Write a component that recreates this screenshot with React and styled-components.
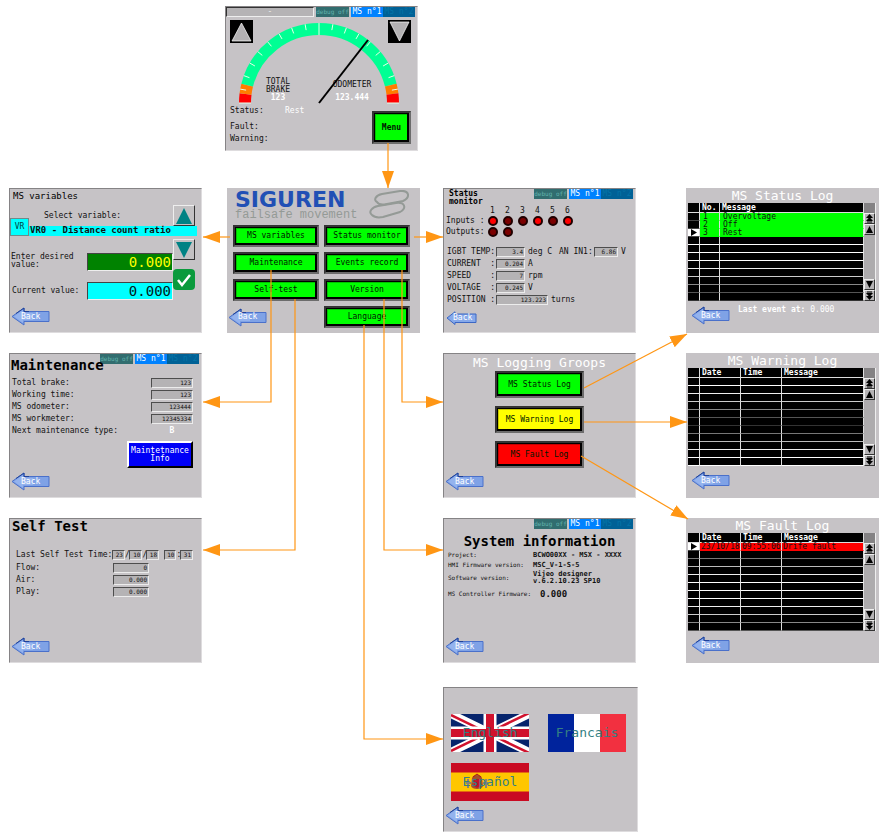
import React from "react";
import styled, { createGlobalStyle } from "styled-components";

const GlobalStyle = createGlobalStyle`
  *, *::before, *::after { box-sizing: border-box; }
  body { margin: 0; background: #fff; }
  button, input { font: inherit; color: inherit; margin: 0; padding: 0; border: 0; border-radius: 0; }
  button { cursor: pointer; }
  h1, h2, p { margin: 0; font-weight: normal; }
  svg { display: block; }
`;

const ORANGE = "#ff9614";

/* ---------- diagram canvas ---------- */

const Canvas = styled.main`
  position: relative;
  width: max-content;
  min-height: 100vh;
  padding: 6px 4px 4px 9px;
  font: 8px/8px "DejaVu Sans Mono", "Liberation Mono", monospace;
  color: #111;
`;

const Board = styled.div`
  display: grid;
  grid-template-columns: 193px 23px 195px 23px 195px 48px 193px;
  grid-template-rows: auto 37px auto 20px auto 20px auto 24px auto;
`;

const Links = styled.svg`
  position: absolute;
  top: 0;
  left: 0;
  pointer-events: none;
`;

const Screen = styled.section`
  grid-column: ${(p) => p.$col * 2 - 1};
  grid-row: ${(p) => p.$row * 2 - 1};
  justify-self: ${(p) => p.$side || "start"};
  display: flex;
  flex-direction: column;
  width: ${(p) => (p.$wide ? 195 : 193)}px;
  min-height: 145px;
  background: #c6c3c6;
  border: 1px solid;
  border-color: ${(p) => (p.$flat ? "#c6c3c6" : "#858385 #dedcde #dedcde #858385")};
`;

/* ---------- shared parts ---------- */

const Header = styled.header`
  display: grid;
  min-height: ${(p) => p.$height}px;
  > * { grid-area: 1 / 1; }
`;

const Title = styled.h2`
  align-self: ${(p) => p.$align || "end"};
  justify-self: ${(p) => (p.$center ? "center" : "start")};
  padding-left: ${(p) => p.$pad || 0}px;
  font-size: ${(p) => p.$size || 14}px;
  line-height: ${(p) => p.$line || 14}px;
  font-weight: ${(p) => (p.$light || p.$plain ? 400 : 700)};
  color: ${(p) => (p.$light ? "#fff" : "#000")};
  white-space: pre;
`;

const TabBar = styled.nav`
  display: flex;
  justify-self: end;
  align-self: start;
  margin-right: 2px;
`;

const Tab = styled.button`
  width: 32px;
  height: 10px;
  line-height: 10px;
  text-align: center;
  white-space: nowrap;
  overflow: hidden;
  background: ${(p) => (p.$on ? "#0082ff" : "#006196")};
  color: ${(p) => (p.$on ? "#fff" : "#0474a8")};
`;

const DebugTab = styled(Tab)`
  width: 33px;
  margin-right: 2px;
  font-size: 6px;
  background: #316d6f;
  color: #62b3ad;
`;

const BackButton = styled.button`
  display: grid;
  align-items: center;
  justify-items: start;
  flex: none;
  background: none;
  color: #fff;
  > * { grid-area: 1 / 1; }
`;

const BackLabel = styled.span`
  padding-left: ${(p) => (p.$small ? 7 : 10)}px;
`;

const Foot = styled.footer`
  display: flex;
  margin-top: auto;
  padding: 0 0 ${(p) => p.$bottom || 6}px ${(p) => p.$left || 1}px;
`;

const KeyButton = styled.button`
  width: ${(p) => p.$w}px;
  height: ${(p) => p.$h}px;
  border: 2px solid;
  border-color: #343434 #6c6c6c #6c6c6c #343434;
  background: ${(p) => p.$tone || "#00ff00"};
  box-shadow: inset 1px 1px 0 #000, inset -2px -2px 0 #000, inset 2px 2px 0 ${(p) => p.$edge || "#00c400"};
  text-align: center;
  white-space: nowrap;
  color: #001800;
  font-weight: ${(p) => (p.$bold ? 700 : 400)};
`;

const Row = styled.div`
  display: flex;
  align-items: center;
  justify-content: ${(p) => (p.$spread ? "space-between" : "flex-start")};
  min-height: 12px;
  white-space: pre;
`;

const Value = styled.output`
  width: ${(p) => p.$w}px;
  height: 10px;
  padding: 0 1px;
  line-height: 8px;
  font-size: ${(p) => p.$size || 6}px;
  text-align: right;
  border: 1px solid;
  border-color: #4d4d4d #ececec #ececec #4d4d4d;
  background: #b5b3b5;
`;

function Back({ small }) {
  return (
    <BackButton>
      {small ? (
        <svg width="31" height="14" viewBox="0 0 31 14" aria-hidden="true">
          <path d="M1 7 L9 .8 V3 H30 V11.500 H9 V13.500 Z" fill="#86a9ea" stroke="#3b66c4" />
        </svg>
      ) : (
        <svg width="39" height="19" viewBox="0 0 39 19" aria-hidden="true">
          <path d="M1 9.500 L13 1 V4.500 H38 V14.500 H13 V18 Z" fill="#7fa2e6" stroke="#4a70ca" />
          <path d="M3 9.500 L12 3 V6 H22 V13 H12 V16 Z" fill="#a9c4f5" opacity=".5" />
          <path d="M5 6.500 L13 1 V4.500 H18" fill="none" stroke="#1f4299" />
        </svg>
      )}
      <BackLabel $small={small}>Back</BackLabel>
    </BackButton>
  );
}

function Tabs() {
  return (
    <TabBar>
      <DebugTab>debug off</DebugTab>
      <Tab $on>MS n°1</Tab>
      <Tab>MS n°2</Tab>
    </TabBar>
  );
}

/* ---------- gauge screen ---------- */

const TopBar = styled.div`
  display: flex;
  justify-content: space-between;
`;

const Ticker = styled.output`
  flex: 1;
  height: 10px;
  margin-right: 2px;
  text-align: center;
  color: #eee;
  border: 1px solid;
  border-color: #333 #eee #eee #333;
  background: #b5b3b5;
`;

const Dial = styled.div`
  display: grid;
  > * { grid-area: 1 / 1; }
`;

const DialKeys = styled.div`
  display: flex;
  justify-content: space-between;
  align-items: flex-start;
  padding: 3px 6px 0 4px;
`;

const DialKey = styled.button`
  display: grid;
  place-items: center;
  width: 23px;
  height: 23px;
  background: #000;
`;

const StatusArea = styled.div`
  display: flex;
  justify-content: space-between;
  padding: 0 6px 0 4px;
`;

const StatusList = styled.div`
  > :first-child { margin-bottom: 4px; }
`;

const StatusName = styled.span`
  width: 55px;
`;

const Bright = styled.span`
  color: #fff;
`;

const MenuSlot = styled.div`
  padding-top: 6px;
`;

const polar = (deg, r) => {
  const a = (deg * Math.PI) / 180;
  return `${(93 - r * Math.cos(a)).toFixed(2)} ${(86 - r * Math.sin(a)).toFixed(2)}`;
};
const arc = (from, to) => `M${polar(from, 74)} A74 74 0 0 1 ${polar(to, 74)}`;
const ticks = Array.from({ length: 19 }, (_, i) => i * 10);

function GaugeScreen() {
  return (
    <Screen $col={2} $row={1}>
      <TopBar>
        <Ticker>-</Ticker>
        <Tabs />
      </TopBar>
      <Dial>
        <svg width="190" height="88" viewBox="0 0 190 88" role="img" aria-label="Gauge">
          <g fill="none" strokeWidth="12">
            <path d={arc(0, 7)} stroke="#f00" />
            <path d={arc(7, 14)} stroke="#ff7d00" />
            <path d={arc(14, 166)} stroke="#00ff94" />
            <path d={arc(166, 173)} stroke="#ff7d00" />
            <path d={arc(173, 180)} stroke="#f00" />
          </g>
          {ticks.map((t) => (
            <path key={t} d={`M${polar(t, t % 90 ? 74 : 68)} L${polar(t, 80)}`} stroke="#e8ffe8" strokeWidth="1" />
          ))}
          <g fontSize="8" textAnchor="middle" fill="#111">
            <text x="52" y="67">TOTAL</text>
            <text x="52" y="75">BRAKE</text>
            <text x="126" y="70">ODOMETER</text>
            <g fill="#fff" fontWeight="700">
              <text x="52" y="83">123</text>
              <text x="126" y="83">123.444</text>
            </g>
          </g>
          <path d="M93 86 L142 23" stroke="#000" strokeWidth="2" />
        </svg>
        <DialKeys>
          <DialKey aria-label="Previous">
            <svg width="21" height="21" viewBox="0 0 21 21"><path d="M10.500 2 L20 20 H1 Z" fill="#b3b1b3" stroke="#fff" strokeWidth=".7" /></svg>
          </DialKey>
          <DialKey aria-label="Next">
            <svg width="21" height="21" viewBox="0 0 21 21"><path d="M1 1 H20 L10.500 20 Z" fill="#b3b1b3" stroke="#fff" strokeWidth=".7" /></svg>
          </DialKey>
        </DialKeys>
      </Dial>
      <StatusArea>
        <StatusList>
          <Row><StatusName>Status:</StatusName><Bright>Rest</Bright></Row>
          <Row>Fault:</Row>
          <Row>Warning:</Row>
        </StatusList>
        <MenuSlot><KeyButton $w={39} $h={33} $bold>Menu</KeyButton></MenuSlot>
      </StatusArea>
    </Screen>
  );
}

/* ---------- variables screen ---------- */

const Picker = styled.div`
  display: flex;
  align-items: flex-end;
`;

const PickerBody = styled.div`
  flex: 1;
`;

const PickerTop = styled.div`
  display: flex;
  align-items: center;
  justify-content: space-between;
  height: 23px;
  padding: 2px 6px 0 15px;
`;

const CodeButton = styled.button`
  width: 19px;
  height: 18px;
  background: #00ffff;
  border: 1px solid #6e8b8b;
  color: #044;
`;

const Selected = styled.output`
  display: block;
  height: 10px;
  margin-right: 4px;
  padding-left: 1px;
  font-size: 9px;
  line-height: 9px;
  font-weight: 700;
  white-space: nowrap;
  background: #00ffff;
`;

const StepButton = styled.button`
  display: grid;
  place-items: center;
  width: 22px;
  height: 21px;
  background: #c3c1c3;
  border: 1px solid;
  border-color: #eee #333 #333 #eee;
`;

const ConfirmButton = styled(StepButton)`
  border: 0;
  border-radius: 4px;
  background: #0a9a3c;
`;

const Entry = styled.div`
  display: flex;
  justify-content: space-between;
  padding-right: 6px;
`;

const EntryFields = styled.div`
  display: grid;
  gap: 11px;
  padding-top: 17px;
`;

const EntryKeys = styled.div`
  display: grid;
  align-content: start;
  gap: 9px;
  padding-top: 3px;
`;

const Field = styled.div`
  display: flex;
  align-items: flex-end;
  min-height: 18px;
`;

const FieldLabel = styled.label`
  align-self: ${(p) => (p.$mid ? "center" : "flex-start")};
  width: 77px;
  padding-left: ${(p) => (p.$mid ? 2 : 1)}px;
`;

const FieldInput = styled.input`
  width: 86px;
  height: 18px;
  padding: 0 1px;
  font-size: 14px;
  text-align: right;
  color: ${(p) => (p.$live ? "#002020" : "#ffff00")};
  background: ${(p) => (p.$live ? "#00ffff" : "#008200")};
  border: 1px solid;
  border-color: #444 #eee #eee #444;
`;

function VariablesScreen() {
  return (
    <Screen $col={1} $row={2}>
      <Header $height={14}><Title $size={9} $pad={3} $plain>MS variables</Title></Header>
      <Picker>
        <CodeButton>VR</CodeButton>
        <PickerBody>
          <PickerTop>
            <span>Select variable:</span>
            <StepButton aria-label="Previous variable">
              <svg width="16" height="16" viewBox="0 0 16 16"><path d="M8 0 L16 16 H0 Z" fill="#008284" /></svg>
            </StepButton>
          </PickerTop>
          <Selected>VR0 - Distance count ratio</Selected>
        </PickerBody>
      </Picker>
      <Entry>
        <EntryFields>
          <Field>
            <FieldLabel htmlFor="desired">Enter desired<br />value:</FieldLabel>
            <FieldInput id="desired" defaultValue="0.000" />
          </Field>
          <Field>
            <FieldLabel $mid htmlFor="current">Current value:</FieldLabel>
            <FieldInput $live id="current" readOnly value="0.000" />
          </Field>
        </EntryFields>
        <EntryKeys>
          <StepButton aria-label="Next variable">
            <svg width="16" height="16" viewBox="0 0 16 16"><path d="M0 0 H16 L8 16 Z" fill="#008284" /></svg>
          </StepButton>
          <ConfirmButton aria-label="Confirm">
            <svg width="16" height="16" viewBox="0 0 16 16"><path d="M2 8 L6 13 L14 3" fill="none" stroke="#fff" strokeWidth="2.500" /></svg>
          </ConfirmButton>
        </EntryKeys>
      </Entry>
      <Foot><Back /></Foot>
    </Screen>
  );
}

/* ---------- menu screen ---------- */

const BrandBar = styled.div`
  display: flex;
  justify-content: space-between;
  height: 36px;
  padding: 1px 8px 0 7px;
`;

const Brand = styled.h1`
  font: 700 22px/20px "DejaVu Sans", "Liberation Sans", sans-serif;
  color: #2150b5;
`;

const Tagline = styled.p`
  font: 12px/10px "Liberation Mono", monospace;
  color: #949a96;
`;

const MenuGrid = styled.nav`
  display: grid;
  grid-template-columns: 91px 86px;
  gap: 5px;
  justify-items: end;
`;

const MenuBack = styled.div`
  justify-self: start;
  align-self: center;
`;

function MenuScreen() {
  return (
    <Screen $col={2} $row={2} $side="end" $flat>
      <BrandBar>
        <div>
          <Brand>SIGUREN</Brand>
          <Tagline>failsafe movement</Tagline>
        </div>
        <svg width="42" height="30" viewBox="0 0 42 30" aria-hidden="true">
          <g fill="none" stroke="#949a96" strokeWidth="2">
            <path d="M8 12 C4 10 7 5 13 4 L31 1 C40 0 42 7 34 11 L18 14 C13 15 9 14 8 12 Z" />
            <path d="M3 25 C-1 22 3 17 9 16 L27 13 C36 12 38 18 31 22 L14 27 C9 28 5 27 3 25 Z" />
          </g>
        </svg>
      </BrandBar>
      <MenuGrid>
        {["MS variables", "Status monitor", "Maintenance", "Events record", "Self-test", "Version"].map((t) => (
          <KeyButton key={t} $w={86} $h={22}>{t}</KeyButton>
        ))}
        <MenuBack><Back /></MenuBack>
        <KeyButton $w={86} $h={22}>Language</KeyButton>
      </MenuGrid>
    </Screen>
  );
}

/* ---------- status monitor ---------- */

const LampGrid = styled.div`
  display: grid;
  grid-template-columns: 41px repeat(6, 15px);
  grid-template-rows: 9px 11px 11px;
  align-items: center;
  justify-items: center;
  margin-bottom: 9px;
`;

const LampName = styled.span`
  grid-column: 1;
  justify-self: start;
  padding-left: 2px;
  white-space: pre;
`;

const Lamp = styled.i`
  width: 10px;
  height: 10px;
  border: 2px solid #200000;
  border-radius: 50%;
  background: ${(p) => (p.$on ? "#ff0000" : "#7b0000")};
`;

const ReadName = styled.span`
  width: ${(p) => p.$w}px;
  padding-left: 3px;
`;

const READINGS = [
  ["CURRENT  :", "0.204", "A", 29],
  ["SPEED    :", "7", "rpm", 29],
  ["VOLTAGE  :", "0.245", "V", 29],
  ["POSITION :", "123.223", "turns", 52],
];

function StatusScreen() {
  return (
    <Screen $col={3} $row={2}>
      <Header $height={17}>
        <Title $size={8} $line={8} $pad={5}>{"Status\nmonitor"}</Title>
        <Tabs />
      </Header>
      <LampGrid>
        <LampName />
        {[1, 2, 3, 4, 5, 6].map((n) => <span key={n}>{n}</span>)}
        <LampName>Inputs :</LampName>
        {[1, 0, 0, 1, 0, 1].map((on, i) => <Lamp key={i} $on={on} />)}
        <LampName>Outputs:</LampName>
        <Lamp /><Lamp />
      </LampGrid>
      <Row>
        <ReadName $w={52}>IGBT TEMP:</ReadName>
        <Value $w={29}>3.4</Value>
        <ReadName $w={31}>deg C</ReadName>
        <ReadName $w={38}>AN IN1:</ReadName>
        <Value $w={24}>6.86</Value>
        <ReadName $w={12}>V</ReadName>
      </Row>
      {READINGS.map(([name, value, unit, w]) => (
        <Row key={name}>
          <ReadName $w={52}>{name}</ReadName>
          <Value $w={w}>{value}</Value>
          <ReadName $w={30}>{unit}</ReadName>
        </Row>
      ))}
      <Foot $left={2} $bottom={7}><Back small /></Foot>
    </Screen>
  );
}

/* ---------- maintenance, self test ---------- */

const List = styled.div`
  padding: ${(p) => p.$top}px 8px 0 ${(p) => p.$left}px;
`;

const Kind = styled.output`
  width: 42px;
  text-align: center;
  font-weight: 700;
  color: #fff;
`;

const InfoButton = styled.button`
  align-self: flex-end;
  width: 66px;
  height: 27px;
  margin: 4px 8px 0 0;
  border: 2px solid;
  border-color: #fff #000 #000 #fff;
  background: #0000f7;
  color: #fff;
`;

function MaintenanceScreen() {
  const items = [["Total brake:", "123"], ["Working time:", "123"], ["MS odometer:", "123444"], ["MS workmeter:", "12345334"]];
  return (
    <Screen $col={1} $row={3}>
      <Header $height={18}>
        <Tabs />
        <Title $pad={1}>Maintenance</Title>
      </Header>
      <List $top={5} $left={2}>
        {items.map(([name, value]) => (
          <Row key={name} $spread><span>{name}</span><Value $w={42}>{value}</Value></Row>
        ))}
        <Row $spread><span>Next maintenance type:</span><Kind>B</Kind></Row>
      </List>
      <InfoButton>Maintetnance<br />Info</InfoButton>
      <Foot><Back /></Foot>
    </Screen>
  );
}

const StampRow = styled(Row)`
  margin-bottom: 1px;
`;

const TestName = styled.span`
  width: 97px;
`;

const Mark = styled.span`
  width: ${(p) => p.$w || 4}px;
  text-align: center;
`;

function SelfTestScreen() {
  return (
    <Screen $col={1} $row={4}>
      <Header $height={14}><Title $pad={2}>Self Test</Title></Header>
      <List $top={16} $left={6}>
        <StampRow>
          <TestName>Last Self Test Time:</TestName>
          <Value $w={13}>23</Value><Mark>/</Mark>
          <Value $w={14}>10</Value><Mark>/</Mark>
          <Value $w={13}>18</Value><Mark $w={5} />
          <Value $w={13}>10</Value><Mark>:</Mark>
          <Value $w={13}>31</Value>
        </StampRow>
        {[["Flow:", "0"], ["Air:", "0.000"], ["Play:", "0.000"]].map(([name, value]) => (
          <Row key={name}><TestName>{name}</TestName><Value $w={36}>{value}</Value></Row>
        ))}
      </List>
      <Foot><Back /></Foot>
    </Screen>
  );
}

/* ---------- logging groups ---------- */

const GroupList = styled.nav`
  display: grid;
  justify-items: center;
  gap: 8px;
`;

function LoggingScreen() {
  return (
    <Screen $col={3} $row={3}>
      <Header $height={17}><Title $size={13} $light $center $align="center">MS Logging Groops</Title></Header>
      <GroupList>
        <KeyButton $w={89} $h={27}>MS Status Log</KeyButton>
        <KeyButton $w={89} $h={27} $tone="#ffff00" $edge="#c8c800">MS Warning Log</KeyButton>
        <KeyButton $w={89} $h={27} $tone="#ff0000" $edge="#c80000">MS Fault Log</KeyButton>
      </GroupList>
      <Foot><Back /></Foot>
    </Screen>
  );
}

/* ---------- system information ---------- */

const InfoGrid = styled.dl`
  display: grid;
  grid-template-columns: 85px 1fr;
  grid-template-rows: 10px 10px 16px 16px;
  align-items: center;
  margin: 0;
  padding: 1px 0 0 4px;
  white-space: nowrap;
  font-size: 6px;
`;

const InfoValue = styled.dd`
  margin: 0;
  padding-left: ${(p) => (p.$large ? 7 : 0)}px;
  font-size: ${(p) => (p.$large ? 9 : 7)}px;
  line-height: 7px;
  font-weight: 700;
`;

function SystemScreen() {
  return (
    <Screen $col={3} $row={4}>
      <Header $height={30}>
        <Tabs />
        <Title $center $line={16}>System information</Title>
      </Header>
      <InfoGrid>
        <dt>Project:</dt><InfoValue>BCWO00XX - MSX - XXXX</InfoValue>
        <dt>HMI Firmware version:</dt><InfoValue>MSC_V-1-S-5</InfoValue>
        <dt>Software version:</dt><InfoValue>Vijeo designer<br />v.6.2.10.23 SP10</InfoValue>
        <dt>MS Controller Firmware:</dt><InfoValue $large>0.000</InfoValue>
      </InfoGrid>
      <Foot><Back /></Foot>
    </Screen>
  );
}

/* ---------- log tables ---------- */

const LogFrame = styled.div`
  display: flex;
  padding: 0 2px 0 1px;
`;

const LogTable = styled.table`
  flex: 1;
  table-layout: fixed;
  border-spacing: 0;
  background: #000;
`;

const LogHead = styled.th`
  width: ${(p) => (p.$w ? `${p.$w}px` : "auto")};
  height: 10px;
  padding: 0 0 0 2px;
  line-height: 9px;
  text-align: left;
  color: #fff;
  border-right: 1px solid #ddd;
  border-bottom: 1px solid #ddd;
`;

const LogCell = styled.td`
  height: 8px;
  padding: 0 0 0 ${(p) => (p.$snug ? 1 : 3)}px;
  line-height: 7px;
  white-space: nowrap;
  background: ${(p) => p.$tone || "#000"};
  border-right: 1px solid #ddd;
  border-bottom: 1px solid ${(p) => p.$line};
`;

const Scroller = styled.div`
  display: flex;
  flex-direction: column;
  width: 12px;
  background: #adabad;
  border-right: 1px solid #eee;
`;

const Corner = styled.div`
  height: 10px;
  background: #848284;
`;

const ScrollButton = styled.button`
  display: grid;
  place-items: center;
  height: 11px;
  background: #b5b3b5;
  border: 1px solid;
  border-color: #eee #333 #333 #eee;
`;

const Track = styled.div`
  flex: 1;
`;

const LogNote = styled.p`
  padding-left: 8px;
  color: #fff;
  white-space: pre;
`;

const Strong = styled.b`
  font-weight: 700;
`;

const LINES = ["#fff", "#eee", "#ccc", "#888", "#555", "#333", "#777", "#bbb", "#eee", "#fff", "#fff"];

const ICONS = {
  top: "M4.500 0 L8 4 H1 Z M4.500 3 L8 7 H1 Z M2 7.500 H7 V8.500 H2 Z",
  up: "M4.500 1 L8 8 H1 Z",
  down: "M1 1 H8 L4.500 8 Z",
  bottom: "M2 .5 H7 V1.500 H2 Z M1 2 H8 L4.500 6 Z M1 5 H8 L4.500 9 Z",
};

function Scroll({ kind }) {
  return (
    <ScrollButton aria-label={kind}>
      <svg width="9" height="9" viewBox="0 0 9 9"><path d={ICONS[kind]} fill="#000" /></svg>
    </ScrollButton>
  );
}

function LogScreen({ row, title, heads, entries, tone, mark, shift = 0, note }) {
  const columns = heads.length;
  return (
    <Screen $col={4} $row={row} $flat>
      <Header $height={14}><Title $size={13} $light $center $align="center">{title}</Title></Header>
      <LogFrame>
        <LogTable>
          <thead>
            <tr>{heads.map(([name, w], i) => <LogHead key={i} $w={w}>{name}</LogHead>)}</tr>
          </thead>
          <tbody>
            {LINES.map((_, r) => {
              const entry = entries[r];
              const line = entry ? tone : LINES[(r + shift) % LINES.length];
              return (
                <tr key={r}>
                  <LogCell $line={entry ? "#444" : line} $tone={r === mark ? "#fff" : "#000"}>
                    {r === mark && <svg width="6" height="7" viewBox="0 0 6 7" aria-hidden="true"><path d="M0 0 L6 3.500 L0 7 Z" /></svg>}
                  </LogCell>
                  {Array.from({ length: columns - 1 }, (_, c) => (
                    <LogCell key={c} $line={line} $tone={entry && tone} $snug={columns > 3}>{entry && entry[c]}</LogCell>
                  ))}
                </tr>
              );
            })}
          </tbody>
        </LogTable>
        <Scroller>
          <Corner />
          <Scroll kind="top" />
          <Scroll kind="up" />
          <Track />
          <Scroll kind="down" />
          <Scroll kind="bottom" />
        </Scroller>
      </LogFrame>
      <Foot $left={4} $bottom={7}>
        <Back />
        {note && <LogNote><Strong>Last event at:</Strong> 0.000</LogNote>}
      </Foot>
    </Screen>
  );
}

const EVENT_HEADS = [["", 12], ["Date", 41], ["Time", 41], ["Message"]];

/* ---------- languages ---------- */

const FlagGrid = styled.div`
  display: grid;
  grid-template-columns: 78px 78px;
  gap: 11px 19px;
  padding: 26px 0 0 7px;
`;

const FlagButton = styled.button`
  display: grid;
  place-items: center;
  height: 38px;
  background: none;
  font-size: 13px;
  color: #357f83;
  > * { grid-area: 1 / 1; }
`;

function LanguageScreen() {
  return (
    <Screen $col={3} $row={5} $wide>
      <FlagGrid>
        <FlagButton>
          <svg width="78" height="38" viewBox="0 0 78 38" aria-hidden="true">
            <path d="M0 0 H78 V38 H0 Z" fill="#06246c" />
            <path d="M0 0 L78 38 M78 0 L0 38" stroke="#fff" strokeWidth="8" />
            <path d="M0 1 L39 20 L78 39 M78 -1 L39 18 L0 37" fill="none" stroke="#d0122d" strokeWidth="2.500" />
            <path d="M39 0 V38 M0 19 H78" stroke="#fff" strokeWidth="13" />
            <path d="M39 0 V38 M0 19 H78" stroke="#d0122d" strokeWidth="8" />
          </svg>
          <span>English</span>
        </FlagButton>
        <FlagButton>
          <svg width="78" height="38" viewBox="0 0 78 38" aria-hidden="true">
            <path d="M0 0 H26 V38 H0 Z" fill="#00239c" />
            <path d="M26 0 H52 V38 H26 Z" fill="#fff" />
            <path d="M52 0 H78 V38 H52 Z" fill="#f23040" />
          </svg>
          <span>Francais</span>
        </FlagButton>
        <FlagButton>
          <svg width="78" height="38" viewBox="0 0 78 38" aria-hidden="true">
            <path d="M0 0 H78 V38 H0 Z" fill="#c90a22" />
            <path d="M0 9.500 H78 V28.500 H0 Z" fill="#ffc600" />
            <path d="M21 15 C22 11 30 11 31 15 L32 23 C31 27 21 27 20 23 Z" fill="#a5502c" />
            <path d="M23 16 H29 V23 L26 25 L23 23 Z" fill="#c3102b" />
            <path d="M17 16 V25 M35 16 V25 M15 20 H20 M32 20 H37" stroke="#87827f" strokeWidth="2" />
            <path d="M22 14 L26 11 L30 14" stroke="#ad1519" fill="none" />
          </svg>
          <span>Español</span>
        </FlagButton>
      </FlagGrid>
      <Foot $bottom={6}><Back /></Foot>
    </Screen>
  );
}

/* ---------- connections between screens ---------- */

const LINKS = [
  "M388 143 V188",
  "M230 237 H203",
  "M414 237 H443",
  "M271 270 V402 H203",
  "M295 299 V550 H203",
  "M402 270 V402 H443",
  "M384 299 V550 H443",
  "M364 325 V739 H443",
  "M584 388 L687 334",
  "M584 422 H687",
  "M581 456 L688 519",
];

export default function App() {
  return (
    <>
      <GlobalStyle />
      <Canvas>
        <Board>
          <GaugeScreen />
          <VariablesScreen />
          <MenuScreen />
          <StatusScreen />
          <LogScreen
            row={2}
            title="MS Status Log"
            heads={[["", 12], ["No.", 20], ["Message"]]}
            entries={[["1", "Overvoltage"], ["2", "Off"], ["3", "Rest"]]}
            tone="#00ff00"
            mark={2}
            shift={6}
            note
          />
          <MaintenanceScreen />
          <LoggingScreen />
          <LogScreen row={3} title="MS Warning Log" heads={EVENT_HEADS} entries={[]} />
          <SelfTestScreen />
          <SystemScreen />
          <LogScreen
            row={4}
            title="MS Fault Log"
            heads={EVENT_HEADS}
            entries={[["23/10/18", "09:55:06", "Drife fault"]]}
            tone="#ff0000"
            mark={0}
            shift={5}
          />
          <LanguageScreen />
        </Board>
        <Links width="883" height="836" viewBox="0 0 883 836" aria-hidden="true">
          <defs>
            <marker id="head" markerUnits="userSpaceOnUse" markerWidth="18" markerHeight="12" refX="17" refY="6" orient="auto">
              <path d="M0 0 L17 6 L0 12 Z" fill={ORANGE} />
            </marker>
          </defs>
          <g fill="none" stroke={ORANGE} strokeWidth="1.200">
            {LINKS.map((d) => <path key={d} d={d} markerEnd="url(#head)" />)}
          </g>
        </Links>
      </Canvas>
    </>
  );
}
